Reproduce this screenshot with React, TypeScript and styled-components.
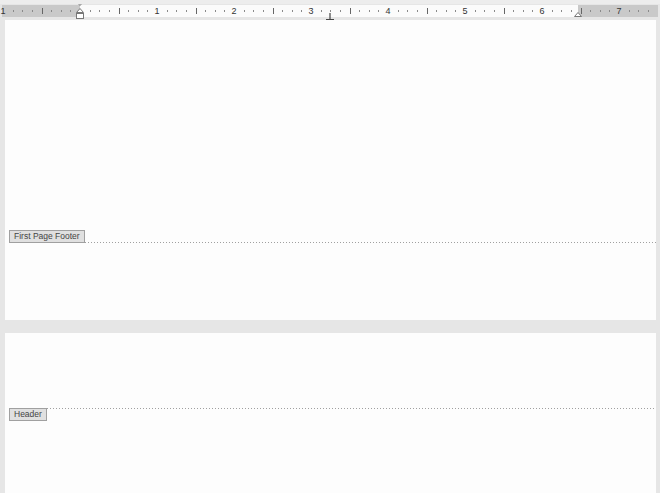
import React from 'react';
import styled, { createGlobalStyle } from 'styled-components';

const GlobalStyle = createGlobalStyle`
  html, body {
    margin: 0;
    padding: 0;
    background: #e6e6e6;
    font-family: 'Liberation Sans', Arial, sans-serif;
    overflow: hidden;
  }
`;

const INCH = 77;
const ZERO = 78;

const Screen = styled.div`
  width: 660px;
  height: 493px;
  display: flex;
  flex-direction: column;
  background: #e6e6e6;
  border-top: 4px solid #ededed;
  box-sizing: border-box;
  overflow: hidden;
`;

const Ruler = styled.div`
  position: relative;
  margin: 1px 2px 0 2px;
  height: 12px;
  background: #c9c9c9;
  flex: none;
`;

const RulerText = styled.div`
  position: absolute;
  left: ${ZERO}px;
  top: 0;
  width: 498px;
  height: 12px;
  background: #fbfbfb;
`;

const Tick = styled.div<{ $size: 'dot' | 'half' }>`
  position: absolute;
  width: 1px;
  background: ${({ $size }) => ($size === 'dot' ? '#8a8a8a' : '#666')};
  top: ${({ $size }) => ($size === 'dot' ? 5 : 3)}px;
  height: ${({ $size }) => ($size === 'dot' ? 2 : 6)}px;
`;

const Num = styled.span`
  position: absolute;
  top: 1px;
  width: 10px;
  margin-left: -5px;
  text-align: center;
  font-size: 9px;
  line-height: 10px;
  color: #333;
`;

const IndentMarker = styled.svg`
  position: absolute;
  overflow: visible;
`;

const Pages = styled.div`
  display: flex;
  flex-direction: column;
  gap: 13px;
  margin-top: 3px;
  padding-left: 5px;
  padding-right: 4px;
`;

const Page = styled.div<{ $height: number }>`
  height: ${({ $height }) => $height}px;
  background: #fdfdfd;
  display: flex;
  flex-direction: column;
  flex: none;
`;

const Boundary = styled.div<{ $top: number; $below?: boolean }>`
  margin-top: ${({ $top }) => $top}px;
  display: flex;
  align-items: ${({ $below }) => ($below ? 'flex-start' : 'flex-end')};
  padding-left: 4px;
`;

const Label = styled.div`
  flex: none;
  height: 11px;
  padding: 0 4px;
  background: #e0e0e0;
  border: 1px solid #a0a0a0;
  font-size: 8.5px;
  line-height: 11px;
  color: #444;
`;

const Dashes = styled.div`
  flex: 1;
  height: 1px;
  background-image: linear-gradient(to right, #a0a0a0 1px, transparent 1px);
  background-size: 3px 1px;
`;

const ticks: { x: number; kind: 'dot' | 'half' | 'num'; label?: number }[] = [];
for (let i = -8; i <= 60; i++) {
  const x = ZERO + (i * INCH) / 8;
  if (x < 1 || x > 655) continue;
  if (i % 8 === 0) {
    if (i !== 0) ticks.push({ x, kind: 'num', label: Math.abs(i / 8) });
  } else if (i % 4 === 0) {
    ticks.push({ x, kind: 'half' });
  } else {
    ticks.push({ x, kind: 'dot' });
  }
}

const App = () => (
  <Screen>
    <GlobalStyle />
    <Ruler>
      <RulerText />
      {ticks.map((t) =>
        t.kind === 'num' ? (
          <Num key={t.x} style={{ left: t.x }}>
            {t.label}
          </Num>
        ) : (
          <Tick key={t.x} $size={t.kind} style={{ left: Math.round(t.x) }} />
        ),
      )}
      <IndentMarker
        width="10"
        height="20"
        viewBox="0 0 10 20"
        style={{ left: ZERO - 5, top: -4 }}
      >
        <path d="M1.5 0.5 H8.5 L5 4.5 Z" fill="#fff" stroke="#777" />
        <path d="M5 7.5 L8.5 11.5 H1.5 Z" fill="#fff" stroke="#777" />
        <rect x="1.5" y="12.5" width="7" height="5" fill="#fff" stroke="#777" />
      </IndentMarker>
      <IndentMarker
        width="10"
        height="10"
        viewBox="0 0 10 10"
        style={{ left: 571, top: 6 }}
      >
        <path d="M5 1.5 L8.5 5.5 H1.5 Z" fill="#fff" stroke="#777" />
      </IndentMarker>
      <IndentMarker
        width="10"
        height="10"
        viewBox="0 0 10 10"
        style={{ left: 323, top: 7 }}
      >
        <path d="M5 1 V7.5 M1 7.5 H9" stroke="#444" strokeWidth="1.2" fill="none" />
      </IndentMarker>
    </Ruler>
    <Pages>
      <Page $height={300}>
        <Boundary $top={210}>
          <Label>First Page Footer</Label>
          <Dashes />
        </Boundary>
      </Page>
      <Page $height={170}>
        <Boundary $top={75} $below>
          <Label>Header</Label>
          <Dashes />
        </Boundary>
      </Page>
    </Pages>
  </Screen>
);

export default App;
